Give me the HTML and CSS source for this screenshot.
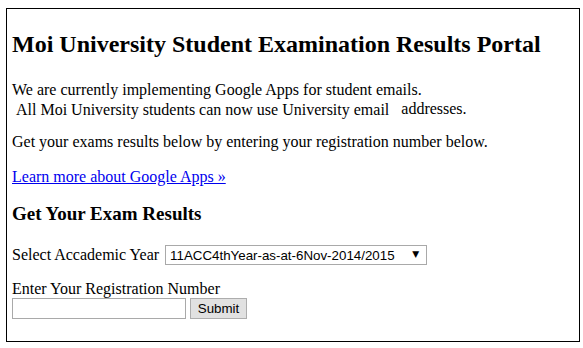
FILE: index.html
```html
<!DOCTYPE html>
<html lang="en">
<head>
    <meta charset="UTF-8">
    <title>Moi University Student Examination Results Portal</title>
    <link rel="stylesheet" href="styles.css">
</head>
<body>
    <div class="portal">
        <h2>Moi University Student Examination Results Portal</h2>
        <p class="notice">We are currently implementing Google Apps for student emails.<br>
            &nbsp;All Moi University students can now use University email &nbsp; <span class="addr">addresses.</span></p>
        <p>Get your exams results below by entering your registration number below.</p>
        <p><a href="#">Learn more about Google Apps &raquo;</a></p>

        <h3>Get Your Exam Results</h3>
        <form class="results-form">
            <div class="row">
                Select Accademic Year
                <span class="select-wrap">
                    <select class="year-select">
                        <option>11ACC4thYear-as-at-6Nov-2014/2015</option>
                    </select>
                    <span class="arrow">&#9660;</span>
                </span>
            </div>
            <div class="reg">
                <label for="regno">Enter Your Registration Number</label><br>
                <input type="text" id="regno" class="reg-input">
                <button type="button" class="submit-btn">Submit</button>
            </div>
        </form>
    </div>
</body>
</html>
```

FILE: styles.css
```css
* {
    box-sizing: border-box;
}

body {
    margin: 8px 3px 7px 6px;
    font-family: "Liberation Serif", "Times New Roman", serif;
    font-size: 16px;
    color: #000;
    background: #fff;
}

.portal {
    border: 1px solid #000;
    padding: 3px 5px 22px;
}

h2 {
    font-size: 24px;
    margin: 19px 0 22px;
}

p {
    margin: 0 0 15px;
    line-height: 20px;
}

.notice {
    margin-bottom: 12px;
}

.addr {
    position: relative;
    top: -1px;
}

a {
    color: #0000ee;
}

h3 {
    font-size: 19px;
    margin: 16px 0 20px;
}

.row {
    display: flex;
    align-items: center;
    gap: 6px;
    margin-bottom: 15px;
}

.select-wrap {
    position: relative;
    display: inline-block;
}

.year-select {
    appearance: none;
    -webkit-appearance: none;
    width: 262px;
    height: 20px;
    padding: 0 0 0 4px;
    border: 1px solid #a9a9a9;
    background: #fff;
    font-family: Arial, "Liberation Sans", sans-serif;
    font-size: 13.33px;
    color: #000;
}

.arrow {
    position: absolute;
    right: 8px;
    top: 4px;
    font-size: 9px;
    font-family: "DejaVu Sans", sans-serif;
    pointer-events: none;
}

.reg {
    line-height: 18px;
}

.reg-input {
    width: 174px;
    height: 21px;
    border: 1px solid #a9a9a9;
    margin: 0;
    vertical-align: top;
}

.submit-btn {
    height: 21px;
    width: 57px;
    margin: 0;
    padding: 0;
    border: 1px solid #adadad;
    background: #e1e1e1;
    font-family: Arial, "Liberation Sans", sans-serif;
    font-size: 13.33px;
    color: #000;
    vertical-align: top;
}
```
